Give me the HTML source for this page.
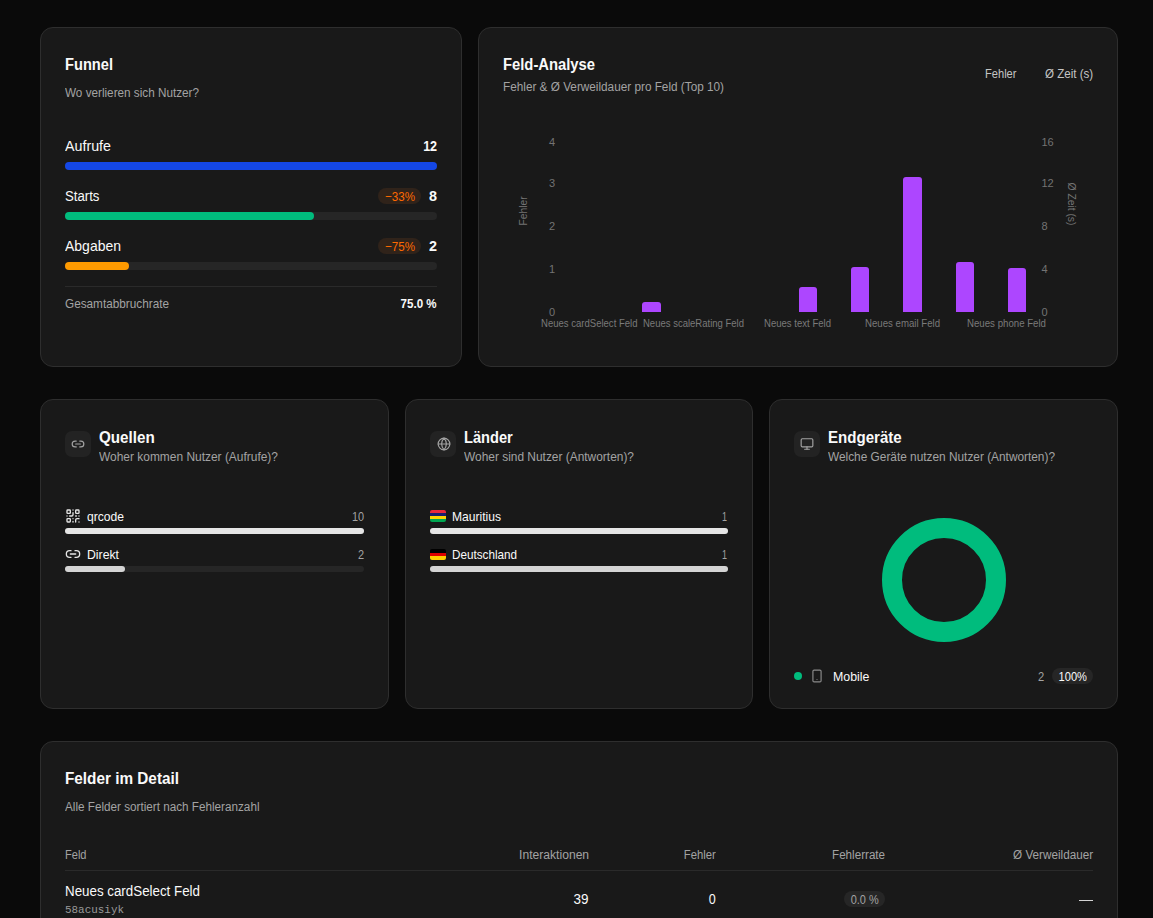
<!DOCTYPE html>
<html><head><meta charset="utf-8"><title>Analytics</title>
<style>
html,body{margin:0;padding:0;background:#0a0a0a;width:1153px;height:918px;overflow:hidden;position:relative}
.t{position:absolute;white-space:nowrap;line-height:1;font-family:"Liberation Sans",sans-serif}
.card{position:absolute;box-sizing:border-box;background:#191919;border:1px solid #2e2e2e;border-radius:13px}
</style></head><body>
<div class="card" style="left:40px;top:27px;width:421.6px;height:340px"></div>
<div class="card" style="left:477.6px;top:27px;width:640.4px;height:340px"></div>
<div class="card" style="left:40px;top:399.2px;width:348.67px;height:309.8px"></div>
<div class="card" style="left:404.67px;top:399.2px;width:348.67px;height:309.8px"></div>
<div class="card" style="left:769.33px;top:399.2px;width:348.67px;height:309.8px"></div>
<div class="card" style="left:40px;top:741.2px;width:1078px;height:400px"></div>
<div style="position:absolute;left:65px;top:162px;width:372px;height:8px;background:#262626;border-radius:4px;"></div>
<div style="position:absolute;left:65px;top:162px;width:372px;height:8px;background:#1447e6;border-radius:4px;"></div>
<div style="position:absolute;left:65px;top:212px;width:372px;height:8px;background:#262626;border-radius:4px;"></div>
<div style="position:absolute;left:65px;top:212px;width:249px;height:8px;background:#00bc7d;border-radius:4px;"></div>
<div style="position:absolute;left:65px;top:262px;width:372px;height:8px;background:#262626;border-radius:4px;"></div>
<div style="position:absolute;left:65px;top:262px;width:63.5px;height:8px;background:#fe9a00;border-radius:4px;"></div>
<div style="position:absolute;left:378px;top:188px;width:43px;height:16px;background:#30231a;border-radius:8px;"></div>
<div style="position:absolute;left:378px;top:238px;width:43px;height:16px;background:#30231a;border-radius:8px;"></div>
<div style="position:absolute;left:65px;top:286px;width:372px;height:1px;background:#2a2a2a;border-radius:0px;"></div>
<div style="position:absolute;left:642.3px;top:302.2px;width:18.3px;height:9.800000000000011px;background:#ad46ff;border-radius:0px;border-radius:3px 3px 0 0;"></div>
<div style="position:absolute;left:798.9px;top:287.1px;width:18.3px;height:24.899999999999977px;background:#ad46ff;border-radius:0px;border-radius:3px 3px 0 0;"></div>
<div style="position:absolute;left:851px;top:266.7px;width:18.3px;height:45.30000000000001px;background:#ad46ff;border-radius:0px;border-radius:3px 3px 0 0;"></div>
<div style="position:absolute;left:903.4px;top:177.4px;width:18.3px;height:134.6px;background:#ad46ff;border-radius:0px;border-radius:3px 3px 0 0;"></div>
<div style="position:absolute;left:955.5px;top:262.3px;width:18.3px;height:49.69999999999999px;background:#ad46ff;border-radius:0px;border-radius:3px 3px 0 0;"></div>
<div style="position:absolute;left:1008px;top:267.8px;width:18.3px;height:44.19999999999999px;background:#ad46ff;border-radius:0px;border-radius:3px 3px 0 0;"></div>
<div style="position:absolute;left:65px;top:431px;width:26px;height:26px;background:#232323;border-radius:7px;"></div>
<div style="position:absolute;left:429.67px;top:431px;width:26px;height:26px;background:#232323;border-radius:7px;"></div>
<div style="position:absolute;left:794.33px;top:431px;width:26px;height:26px;background:#232323;border-radius:7px;"></div>
<svg style="position:absolute;left:71px;top:437px" width="14" height="14" viewBox="0 0 24 24" fill="none" stroke="#a3a3a3" stroke-width="2" stroke-linecap="round" stroke-linejoin="round"><path d="M9 17H7A5 5 0 0 1 7 7h2"/><path d="M15 7h2a5 5 0 1 1 0 10h-2"/><line x1="8" x2="16" y1="12" y2="12"/></svg>
<svg style="position:absolute;left:436.67px;top:437px" width="14" height="14" viewBox="0 0 24 24" fill="none" stroke="#a3a3a3" stroke-width="2" stroke-linecap="round" stroke-linejoin="round"><circle cx="12" cy="12" r="10"/><path d="M12 2a14.5 14.5 0 0 0 0 20 14.5 14.5 0 0 0 0-20"/><path d="M2 12h20"/></svg>
<svg style="position:absolute;left:800.3px;top:437px" width="14" height="14" viewBox="0 0 24 24" fill="none" stroke="#a3a3a3" stroke-width="2" stroke-linecap="round" stroke-linejoin="round"><rect width="20" height="14" x="2" y="3" rx="2"/><line x1="8" x2="16" y1="21" y2="21"/><line x1="12" x2="12" y1="17" y2="21"/></svg>
<div style="position:absolute;left:65px;top:528px;width:298.67px;height:6px;background:#262626;border-radius:3px;"></div>
<div style="position:absolute;left:65px;top:528px;width:298.67px;height:6px;background:#e5e5e5;border-radius:3px;"></div>
<div style="position:absolute;left:65px;top:566px;width:298.67px;height:6px;background:#262626;border-radius:3px;"></div>
<div style="position:absolute;left:65px;top:566px;width:59.73400000000001px;height:6px;background:#d4d4d4;border-radius:3px;"></div>
<div style="position:absolute;left:429.67px;top:528px;width:298.67px;height:6px;background:#262626;border-radius:3px;"></div>
<div style="position:absolute;left:429.67px;top:528px;width:298.67px;height:6px;background:#e5e5e5;border-radius:3px;"></div>
<div style="position:absolute;left:429.67px;top:566px;width:298.67px;height:6px;background:#262626;border-radius:3px;"></div>
<div style="position:absolute;left:429.67px;top:566px;width:298.67px;height:6px;background:#d4d4d4;border-radius:3px;"></div>
<svg style="position:absolute;left:65px;top:508px" width="16" height="16" viewBox="0 0 24 24" fill="none" stroke="#e5e5e5" stroke-width="2" stroke-linecap="round" stroke-linejoin="round"><rect width="5" height="5" x="3" y="3" rx="1"/><rect width="5" height="5" x="16" y="3" rx="1"/><rect width="5" height="5" x="3" y="16" rx="1"/><path d="M21 16h-3a2 2 0 0 0-2 2v3"/><path d="M21 21v.01"/><path d="M12 7v3a2 2 0 0 1-2 2H7"/><path d="M3 12h.01"/><path d="M12 3h.01"/><path d="M12 16v.01"/><path d="M16 12h1"/><path d="M21 12v.01"/><path d="M12 21v-1"/></svg>
<svg style="position:absolute;left:65px;top:546px" width="16" height="16" viewBox="0 0 24 24" fill="none" stroke="#e5e5e5" stroke-width="2" stroke-linecap="round" stroke-linejoin="round"><path d="M9 17H7A5 5 0 0 1 7 7h2"/><path d="M15 7h2a5 5 0 1 1 0 10h-2"/><line x1="8" x2="16" y1="12" y2="12"/></svg>
<div style="position:absolute;left:430px;top:510px;width:16px;height:12px;border-radius:2px;overflow:hidden"><div style="height:3px;background:#ea2839"></div><div style="height:3px;background:#1a206d"></div><div style="height:3px;background:#ffd500"></div><div style="height:3px;background:#00a551"></div></div>
<div style="position:absolute;left:430px;top:548.8px;width:16px;height:11.4px;border-radius:2px;overflow:hidden"><div style="height:3.8px;background:#000"></div><div style="height:3.8px;background:#dd0000"></div><div style="height:3.8px;background:#ffce00"></div></div>
<svg style="position:absolute;left:881.5px;top:517.7px" width="124" height="124" viewBox="0 0 124 124"><circle cx="62" cy="62" r="52" fill="none" stroke="#00bc7d" stroke-width="20"/></svg>
<div style="position:absolute;left:793.8px;top:672px;width:8.4px;height:8.4px;background:#00bc7d;border-radius:5px;"></div>
<svg style="position:absolute;left:810px;top:669px" width="14" height="14" viewBox="0 0 24 24" fill="none" stroke="#8a8a8a" stroke-width="2" stroke-linecap="round" stroke-linejoin="round"><rect width="14" height="20" x="5" y="2" rx="2" ry="2"/><path d="M12 18h.01"/></svg>
<div style="position:absolute;left:1052px;top:668px;width:41px;height:16px;background:#262626;border-radius:8px;"></div>
<div style="position:absolute;left:65px;top:870px;width:1028px;height:1px;background:#2a2a2a;border-radius:0px;"></div>
<div style="position:absolute;left:844px;top:891px;width:41px;height:16px;background:#262626;border-radius:8px;"></div>
<div style="position:absolute;left:1078.5px;top:899.5px;width:14.5px;height:1.2px;background:#d4d4d4;border-radius:0px;"></div>
<div class="t" style="left:523.6px;top:210.8px;font-size:10.3px;color:#737373;transform:translate(-50%,-50%) rotate(-90deg)">Fehler</div>
<div class="t" style="left:1071.4px;top:203.5px;font-size:10.3px;color:#737373;transform:translate(-50%,-50%) rotate(90deg)">Ø Zeit (s)</div>
<div class="t" style="left:65.34px;transform-origin:0 0;top:57.00px;font-size:15.94px;font-weight:700;color:#fafafa;transform:scaleX(0.9189);">Funnel</div>
<div class="t" style="left:65.07px;transform-origin:0 0;top:86.00px;font-size:13.19px;font-weight:400;color:#a3a3a3;transform:scaleX(0.8889);">Wo verlieren sich Nutzer?</div>
<div class="t" style="left:65.06px;transform-origin:0 0;top:139.00px;font-size:14.49px;font-weight:400;color:#fafafa;transform:scaleX(0.9849);">Aufrufe</div>
<div class="t" style="right:716.32px;transform-origin:100% 0;top:139.00px;font-size:14.49px;font-weight:700;color:#fafafa;transform:scaleX(0.8682);">12</div>
<div class="t" style="left:65.06px;transform-origin:0 0;top:189.00px;font-size:14.49px;font-weight:400;color:#fafafa;transform:scaleX(0.9090);">Starts</div>
<div class="t" style="right:716.12px;transform-origin:100% 0;top:189.00px;font-size:14.49px;font-weight:700;color:#fafafa;transform:scaleX(0.9922);">8</div>
<div class="t" style="left:65.06px;transform-origin:0 0;top:239.00px;font-size:14.20px;font-weight:400;color:#fafafa;transform:scaleX(0.9857);">Abgaben</div>
<div class="t" style="right:716.12px;transform-origin:100% 0;top:239.00px;font-size:14.49px;font-weight:700;color:#fafafa;transform:scaleX(0.9922);">2</div>
<div class="t" style="left:384.67px;transform-origin:0 0;top:191.00px;font-size:12.75px;font-weight:400;color:#ff6900;transform:scaleX(0.9100);">−33%</div>
<div class="t" style="left:384.67px;transform-origin:0 0;top:241.00px;font-size:12.75px;font-weight:400;color:#ff6900;transform:scaleX(0.9100);">−75%</div>
<div class="t" style="left:65.08px;transform-origin:0 0;top:299.00px;font-size:11.88px;font-weight:400;color:#a3a3a3;transform:scaleX(0.9909);">Gesamtabbruchrate</div>
<div class="t" style="right:716.38px;transform-origin:100% 0;top:297.00px;font-size:13.04px;font-weight:700;color:#fafafa;transform:scaleX(0.8872);">75.0 %</div>
<div class="t" style="left:502.84px;transform-origin:0 0;top:57.00px;font-size:15.94px;font-weight:700;color:#fafafa;transform:scaleX(0.9274);">Feld-Analyse</div>
<div class="t" style="left:502.87px;transform-origin:0 0;top:81.00px;font-size:12.61px;font-weight:400;color:#a3a3a3;transform:scaleX(0.9329);">Fehler &amp; Ø Verweildauer pro Feld (Top 10)</div>
<div class="t" style="left:985.07px;transform-origin:0 0;top:67.00px;font-size:13.04px;font-weight:400;color:#c4c4c4;transform:scaleX(0.8528);">Fehler</div>
<div class="t" style="left:1044.57px;transform-origin:0 0;top:67.00px;font-size:13.04px;font-weight:400;color:#c4c4c4;transform:scaleX(0.8877);">Ø Zeit (s)</div>
<div class="t" style="left:99.14px;transform-origin:0 0;top:430.00px;font-size:15.94px;font-weight:700;color:#fafafa;transform:scaleX(0.9529);">Quellen</div>
<div class="t" style="left:99.07px;transform-origin:0 0;top:451.00px;font-size:12.75px;font-weight:400;color:#a3a3a3;transform:scaleX(0.9367);">Woher kommen Nutzer (Aufrufe)?</div>
<div class="t" style="left:463.81px;transform-origin:0 0;top:430.00px;font-size:15.94px;font-weight:700;color:#fafafa;transform:scaleX(0.9183);">Länder</div>
<div class="t" style="left:463.74px;transform-origin:0 0;top:451.00px;font-size:12.75px;font-weight:400;color:#a3a3a3;transform:scaleX(0.9346);">Woher sind Nutzer (Antworten)?</div>
<div class="t" style="left:828.47px;transform-origin:0 0;top:430.00px;font-size:15.94px;font-weight:700;color:#fafafa;transform:scaleX(0.9456);">Endgeräte</div>
<div class="t" style="left:828.40px;transform-origin:0 0;top:451.00px;font-size:12.75px;font-weight:400;color:#a3a3a3;transform:scaleX(0.9293);">Welche Geräte nutzen Nutzer (Antworten)?</div>
<div class="t" style="left:86.97px;transform-origin:0 0;top:510.00px;font-size:13.00px;font-weight:400;color:#fafafa;transform:scaleX(0.9308);">qrcode</div>
<div class="t" style="right:788.90px;transform-origin:100% 0;top:511.00px;font-size:12.60px;font-weight:400;color:#a3a3a3;transform:scaleX(0.8633);">10</div>
<div class="t" style="left:87.17px;transform-origin:0 0;top:548.00px;font-size:13.00px;font-weight:400;color:#fafafa;transform:scaleX(0.9425);">Direkt</div>
<div class="t" style="right:788.90px;transform-origin:100% 0;top:549.00px;font-size:12.60px;font-weight:400;color:#a3a3a3;transform:scaleX(0.8695);">2</div>
<div class="t" style="left:452.07px;transform-origin:0 0;top:510.00px;font-size:13.00px;font-weight:400;color:#fafafa;transform:scaleX(0.9289);">Mauritius</div>
<div class="t" style="right:426.00px;transform-origin:100% 0;top:511.00px;font-size:12.60px;font-weight:400;color:#a3a3a3;transform:scaleX(0.7127);">1</div>
<div class="t" style="left:452.07px;transform-origin:0 0;top:548.00px;font-size:13.00px;font-weight:400;color:#fafafa;transform:scaleX(0.8993);">Deutschland</div>
<div class="t" style="right:426.00px;transform-origin:100% 0;top:549.00px;font-size:12.60px;font-weight:400;color:#a3a3a3;transform:scaleX(0.7127);">1</div>
<div class="t" style="left:832.57px;transform-origin:0 0;top:670.00px;font-size:13.00px;font-weight:400;color:#fafafa;transform:scaleX(0.9505);">Mobile</div>
<div class="t" style="right:109.18px;transform-origin:100% 0;top:670.00px;font-size:13.00px;font-weight:400;color:#a3a3a3;transform:scaleX(0.8570);">2</div>
<div class="t" style="right:65.80px;transform-origin:100% 0;top:671.00px;font-size:12.50px;font-weight:400;color:#fafafa;transform:scaleX(0.8879);">100%</div>
<div class="t" style="left:65.34px;transform-origin:0 0;top:771.00px;font-size:15.94px;font-weight:700;color:#fafafa;transform:scaleX(0.9605);">Felder im Detail</div>
<div class="t" style="left:65.07px;transform-origin:0 0;top:801.00px;font-size:12.61px;font-weight:400;color:#a3a3a3;transform:scaleX(0.9281);">Alle Felder sortiert nach Fehleranzahl</div>
<div class="t" style="left:65.08px;transform-origin:0 0;top:849.00px;font-size:12.30px;font-weight:400;color:#a3a3a3;transform:scaleX(0.8988);">Feld</div>
<div class="t" style="right:564.31px;transform-origin:100% 0;top:849.00px;font-size:12.30px;font-weight:400;color:#a3a3a3;transform:scaleX(0.9844);">Interaktionen</div>
<div class="t" style="right:436.91px;transform-origin:100% 0;top:849.00px;font-size:12.30px;font-weight:400;color:#a3a3a3;transform:scaleX(0.9180);">Fehler</div>
<div class="t" style="right:267.91px;transform-origin:100% 0;top:849.00px;font-size:12.30px;font-weight:400;color:#a3a3a3;transform:scaleX(0.9456);">Fehlerrate</div>
<div class="t" style="right:59.91px;transform-origin:100% 0;top:849.00px;font-size:12.30px;font-weight:400;color:#a3a3a3;transform:scaleX(0.9515);">Ø Verweildauer</div>
<div class="t" style="left:65.06px;transform-origin:0 0;top:884.00px;font-size:14.00px;font-weight:400;color:#fafafa;transform:scaleX(0.9531);">Neues cardSelect Feld</div>
<div class="t" style="left:64.88px;transform-origin:0 0;top:904.00px;font-size:11.60px;font-weight:400;color:#9a9a9a;font-family:'Liberation Mono',monospace;transform:scaleX(0.9421);">58acusiyk</div>
<div class="t" style="right:564.64px;transform-origin:100% 0;top:892.00px;font-size:14.00px;font-weight:400;color:#fafafa;transform:scaleX(0.9629);">39</div>
<div class="t" style="right:436.84px;transform-origin:100% 0;top:892.00px;font-size:14.00px;font-weight:400;color:#fafafa;transform:scaleX(0.8978);">0</div>
<div class="t" style="right:273.92px;transform-origin:100% 0;top:894.00px;font-size:12.00px;font-weight:400;color:#a3a3a3;transform:scaleX(0.9124);">0.0 %</div>
<div class="t" style="right:597.96px;transform-origin:100% 0;top:137.00px;font-size:11.00px;font-weight:400;color:#737373;">4</div>
<div class="t" style="right:597.96px;transform-origin:100% 0;top:178.00px;font-size:11.00px;font-weight:400;color:#737373;">3</div>
<div class="t" style="right:597.96px;transform-origin:100% 0;top:221.00px;font-size:11.00px;font-weight:400;color:#737373;">2</div>
<div class="t" style="right:597.96px;transform-origin:100% 0;top:264.00px;font-size:11.00px;font-weight:400;color:#737373;">1</div>
<div class="t" style="right:597.96px;transform-origin:100% 0;top:307.00px;font-size:11.00px;font-weight:400;color:#737373;">0</div>
<div class="t" style="left:1041.39px;transform-origin:0 0;top:137.00px;font-size:11.00px;font-weight:400;color:#737373;">16</div>
<div class="t" style="left:1041.39px;transform-origin:0 0;top:178.00px;font-size:11.00px;font-weight:400;color:#737373;">12</div>
<div class="t" style="left:1041.39px;transform-origin:0 0;top:221.00px;font-size:11.00px;font-weight:400;color:#737373;">8</div>
<div class="t" style="left:1041.39px;transform-origin:0 0;top:264.00px;font-size:11.00px;font-weight:400;color:#737373;">4</div>
<div class="t" style="left:1041.39px;transform-origin:0 0;top:307.00px;font-size:11.00px;font-weight:400;color:#737373;">0</div>
<div class="t" style="left:540.60px;transform-origin:0 0;top:319.00px;font-size:10.30px;font-weight:400;color:#7a7a7a;transform:scaleX(0.9264);">Neues cardSelect Feld</div>
<div class="t" style="left:642.90px;transform-origin:0 0;top:319.00px;font-size:10.30px;font-weight:400;color:#7a7a7a;transform:scaleX(0.9238);">Neues scaleRating Feld</div>
<div class="t" style="left:763.90px;transform-origin:0 0;top:319.00px;font-size:10.30px;font-weight:400;color:#7a7a7a;transform:scaleX(0.9289);">Neues text Feld</div>
<div class="t" style="left:864.90px;transform-origin:0 0;top:319.00px;font-size:10.30px;font-weight:400;color:#7a7a7a;transform:scaleX(0.9360);">Neues email Feld</div>
<div class="t" style="left:966.90px;transform-origin:0 0;top:319.00px;font-size:10.30px;font-weight:400;color:#7a7a7a;transform:scaleX(0.9387);">Neues phone Feld</div>
</body></html>
